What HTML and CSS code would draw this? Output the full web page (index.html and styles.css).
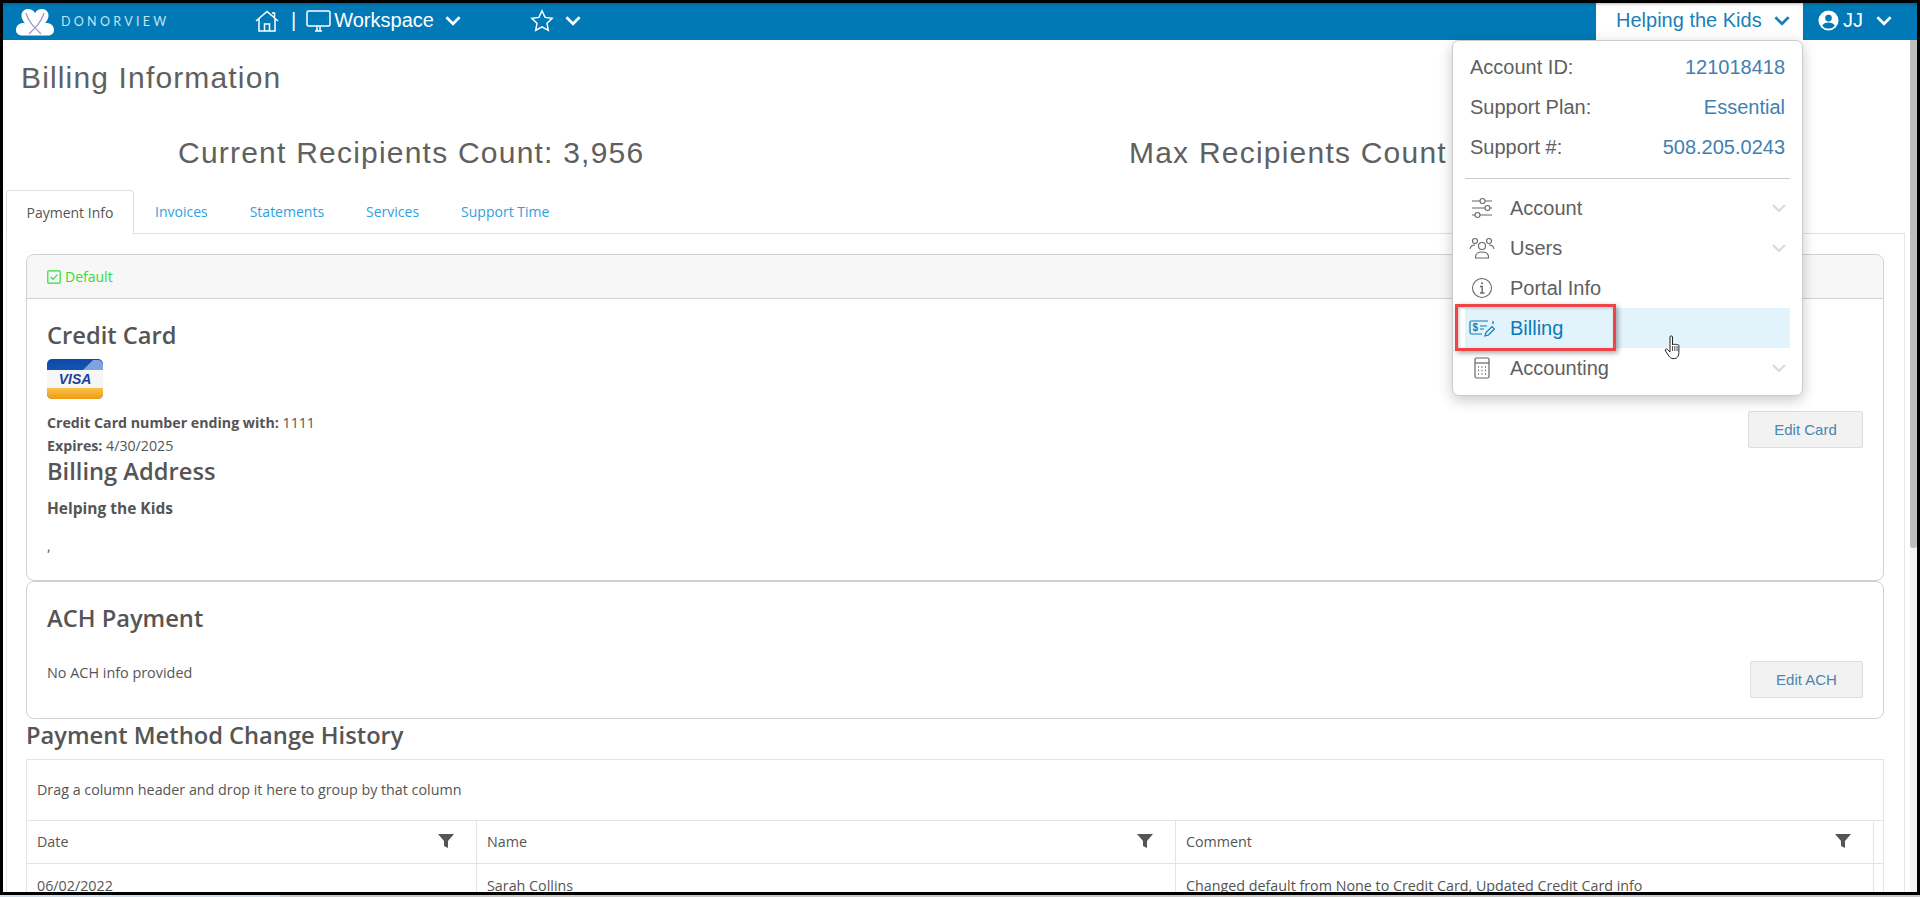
FILE: index.html
```html
<!DOCTYPE html>
<html lang="en">
<head>
<meta charset="utf-8">
<title>Billing Information</title>
<link rel="stylesheet" href="styles.css">
</head>
<body>
<div class="frame">
  <header class="nav">
    <div class="logo">
      <svg class="logo-mark" viewBox="0 0 42 28" width="42" height="28">
        <path fill="#fff" d="M2 22c0-4 3-7 7-7 .8 0 1.400.1 2 .3C8.500 12.500 7.500 10 7.500 7.500 7.500 3.500 10.500 1 14 1c3 0 5.500 1.500 7 4 1.500-2.500 4-4 7-4 3.500 0 6.500 2.500 6.500 6.500 0 2.500-1 5-3.500 7.800.6-.2 1.300-.3 2-.3 4 0 7 3 7 7s-3 5.500-6.500 5.500H8.500C5 27.500 2 26 2 22z"/>
        <path fill="none" stroke="#9d93c4" stroke-width="1.200" d="M12 5c2 8 8 14 15 21M30 5c-2 8-8 14-15 21"/>
      </svg>
      <span class="logo-text">DONORVIEW</span>
    </div>
    <svg class="ic-home" viewBox="0 0 24 22" width="24" height="22" fill="none" stroke="#fff" stroke-width="1.500">
      <path d="M1 11 12 1.500 23 11"/><path d="M4 9v12h16V9"/><path d="M9.500 21v-7h5v7"/><path d="M17 3h2.500v4"/>
    </svg>
    <span class="sep">|</span>
    <svg class="ic-monitor" viewBox="0 0 25 22" width="25" height="22" fill="none" stroke="#fff" stroke-width="1.500">
      <rect x="1" y="1" width="23" height="15" rx="1.500"/><path d="M9 21h7M11 16.500v4M14 16.500v4"/>
    </svg>
    <span class="nav-label">Workspace</span>
    <svg class="chev chev-work" viewBox="0 0 16 10" width="18" height="11"><path d="M2 2l6 6 6-6"/></svg>
    <svg class="ic-star" viewBox="0 0 24 23" width="24" height="23" fill="none" stroke="#fff" stroke-width="1.500">
      <path d="M12 1.800l3.100 6.600 7.100.9-5.200 5 1.300 7.100-6.300-3.500-6.300 3.500 1.300-7.100-5.200-5 7.100-.9z"/>
    </svg>
    <svg class="chev chev-star" viewBox="0 0 16 10" width="18" height="11"><path d="M2 2l6 6 6-6"/></svg>
    <div class="org">
      <span>Helping the Kids</span>
      <svg class="chev chev-org" viewBox="0 0 16 10" width="18" height="11"><path d="M2 2l6 6 6-6"/></svg>
    </div>
    <div class="user">
      <svg viewBox="0 0 22 22" width="21" height="21"><circle cx="11" cy="11" r="10.500" fill="#fff"/><circle cx="11" cy="8.500" r="3.500" fill="#0079b6"/><path fill="#0079b6" d="M4.500 16.500c1-2.800 3.500-3.500 6.500-3.500s5.500.7 6.500 3.500c-1.500 2-3.800 3-6.500 3s-5-1-6.500-3z"/></svg>
      <span>JJ</span>
      <svg class="chev chev-user" viewBox="0 0 16 10" width="18" height="11"><path d="M2 2l6 6 6-6"/></svg>
    </div>
  </header>

  <div class="main">
    <main class="content">
      <h1 class="title">Billing Information</h1>
      <div class="stats">
        <div>Current Recipients Count: 3,956</div>
        <div>Max Recipients Count</div>
      </div>
      <nav class="tabs">
        <a class="tab active">Payment Info</a>
        <a class="tab">Invoices</a>
        <a class="tab">Statements</a>
        <a class="tab">Services</a>
        <a class="tab">Support Time</a>
      </nav>
      <section class="pane">
        <div class="card card-cc">
          <div class="card-head">
            <svg viewBox="0 0 14 14" width="14" height="14" fill="none" stroke="#2fdc3a" stroke-width="1.200"><rect x=".8" y=".8" width="12.400" height="12.400" rx="1"/><path d="M3.800 7l2.300 2.400 4.300-4.800"/></svg>
            <span>Default</span>
          </div>
          <div class="card-body">
            <div>
              <h3 class="h-cc">Credit Card</h3>
              <svg class="visa" viewBox="0 0 56 40" width="56" height="40">
                <defs>
                  <linearGradient id="vb" x1="0" y1="0" x2="0" y2="1"><stop offset="0" stop-color="#0c4aa8"/><stop offset="1" stop-color="#2c6cc4"/></linearGradient>
                  <linearGradient id="vo" x1="0" y1="0" x2="0" y2="1"><stop offset="0" stop-color="#fbc24a"/><stop offset="1" stop-color="#ee9a12"/></linearGradient>
                </defs>
                <rect width="56" height="40" rx="5" fill="url(#vb)"/>
                <path d="M36 11 46 1h5a5 5 0 0 1 5 5v5z" fill="#7fa3dc"/>
                <rect y="11" width="56" height="18" fill="#f6f6f6"/>
                <path d="M0 29h56v6a5 5 0 0 1-5 5H5a5 5 0 0 1-5-5z" fill="url(#vo)"/>
                <text x="28" y="25" text-anchor="middle" class="visa-text">VISA</text>
              </svg>
              <p class="line first"><b>Credit Card number ending with:</b> 1111</p>
              <p class="line"><b>Expires:</b> 4/30/2025</p>
              <h3>Billing Address</h3>
              <p class="line org-name"><b>Helping the Kids</b></p>
              <p class="line comma">,</p>
            </div>
            <button class="btn btn-card">Edit Card</button>
          </div>
        </div>
        <div class="card card-ach">
          <div class="card-body">
            <div>
              <h3 class="h-ach">ACH Payment</h3>
              <p class="line no-ach">No ACH info provided</p>
            </div>
            <button class="btn btn-ach">Edit ACH</button>
          </div>
        </div>
        <h3 class="h-history">Payment Method Change History</h3>
        <div class="grid">
          <div class="group-row">Drag a column header and drop it here to group by that column</div>
          <div class="grid-row grid-header">
            <div class="cell">Date<svg class="funnel" viewBox="0 0 16 16" width="16" height="16"><path d="M0 1h16l-6 7v7l-4-2V8z"/></svg></div>
            <div class="cell">Name<svg class="funnel" viewBox="0 0 16 16" width="16" height="16"><path d="M0 1h16l-6 7v7l-4-2V8z"/></svg></div>
            <div class="cell">Comment<svg class="funnel" viewBox="0 0 16 16" width="16" height="16"><path d="M0 1h16l-6 7v7l-4-2V8z"/></svg></div>
            <div class="cell"></div>
          </div>
          <div class="grid-row grid-data">
            <div class="cell">06/02/2022</div>
            <div class="cell">Sarah Collins</div>
            <div class="cell">Changed default from None to Credit Card, Updated Credit Card info</div>
            <div class="cell"></div>
          </div>
        </div>
      </section>
    </main>
    <div class="scrollbar"><div class="thumb"></div></div>
  </div>

  <aside class="menu">
    <dl class="info">
      <div><dt>Account ID:</dt><dd>121018418</dd></div>
      <div><dt>Support Plan:</dt><dd>Essential</dd></div>
      <div><dt>Support #:</dt><dd>508.205.0243</dd></div>
    </dl>
    <div class="items">
      <div class="item">
        <svg viewBox="0 0 24 24" width="24" height="24" fill="none" stroke="#666" stroke-width="1.100"><path d="M2 5h8M15 5h7M2 12h13M20 12h2M2 19h3M10 19h12"/><circle cx="12.500" cy="5" r="2.500"/><circle cx="17.500" cy="12" r="2.500"/><circle cx="7.500" cy="19" r="2.500"/></svg>
        <span>Account</span>
        <svg class="chev-light" viewBox="0 0 16 10" width="16" height="10"><path d="M2 2l6 6 6-6"/></svg>
      </div>
      <div class="item">
        <svg viewBox="0 0 26 24" width="26" height="24" fill="none" stroke="#666" stroke-width="1.100"><circle cx="13" cy="10" r="3.500"/><path d="M6.500 22v-1c0-3.500 3-5 6.500-5s6.500 1.500 6.500 5v1z"/><circle cx="6" cy="5" r="2.500"/><circle cx="20" cy="5" r="2.500"/><path d="M1 13c.5-2.500 2.500-4 5-4M25 13c-.5-2.500-2.500-4-5-4"/></svg>
        <span>Users</span>
        <svg class="chev-light" viewBox="0 0 16 10" width="16" height="10"><path d="M2 2l6 6 6-6"/></svg>
      </div>
      <div class="item">
        <svg viewBox="0 0 24 24" width="24" height="24" fill="none" stroke="#666" stroke-width="1.100"><circle cx="12" cy="12" r="9.500"/><path d="M10 10.500h2.200V17M10 17h4.500" stroke-width="1.400"/><circle cx="12" cy="7.300" r="1" fill="#666" stroke="none"/></svg>
        <span>Portal Info</span>
      </div>
      <div class="item current">
        <svg viewBox="0 0 26 24" width="26" height="24" fill="none" stroke="#0a7ab8" stroke-width="1.200"><path d="M19 5H2.500A1.500 1.500 0 0 0 1 6.500v10A1.500 1.500 0 0 0 2.500 18H13M24 5v3"/><path d="M11 10h7M11 13h4"/><path d="M16 20l1-3.500 6-6 2.500 2.500-6 6z"/><text x="3.500" y="15" class="dollar">$</text></svg>
        <span>Billing</span>
      </div>
      <div class="item">
        <svg viewBox="0 0 24 24" width="24" height="24" fill="none" stroke="#666" stroke-width="1.200"><rect x="5" y="2" width="14" height="20" rx="1.500"/><path d="M5 7h14"/><path d="M8 11h1M11.500 11h1M15 11h1M8 14.500h1M11.500 14.500h1M15 14.500h1M8 18h1M11.500 18h1M15 18h1" stroke-width="1.500"/></svg>
        <span>Accounting</span>
        <svg class="chev-light" viewBox="0 0 16 10" width="16" height="10"><path d="M2 2l6 6 6-6"/></svg>
      </div>
    </div>
  </aside>
  <div class="redbox"></div>
  <svg class="cursor" viewBox="0 0 18 26" width="18" height="26"><path fill="#fff" stroke="#222" stroke-width="1" d="M6 2c0-1.500 2.500-1.500 2.500 0v8c0-1 2-1 2.200 0 .1-1 2-1 2.200.1.200-.9 2-.7 2 .5v7c0 3-1.500 6-4.500 6H9c-2 0-3-1-4-2.500L1.500 16c-1-1.500.8-2.800 2-1.500L6 17z"/><path stroke="#222" stroke-width=".8" d="M8.500 11v5M10.800 11v5M13 11v5"/></svg>
</div>
<div class="status"><div class="status-left"></div></div>
</body>
</html>
```

FILE: styles.css
```css
* { box-sizing: border-box; }
html, body { margin: 0; height: 897px; overflow: hidden; background: #c8c8c8; }
body { font-family: "Open Sans", sans-serif; color: #555; }

.frame {
  position: relative;
  height: 895px;
  border: 3px solid #000;
  background: #fff;
  display: flex;
  flex-direction: column;
  overflow: hidden;
}

/* top bar */
.nav {
  height: 37px;
  padding-bottom: 2px;
  flex: none;
  display: flex;
  align-items: center;
  background: #0079b6;
  color: #fff;
  font-family: "Liberation Sans", sans-serif;
  box-shadow: inset 0 3px 3px -2px rgba(0, 0, 0, .25);
}
.logo { width: 249px; padding: 2px 0 0 11px; display: flex; align-items: center; flex: none; }
.logo-mark { flex: none; }
.logo-text {
  margin-left: 5px;
  font-family: "Lato", sans-serif;
  font-size: 12.500px;
  letter-spacing: 3.300px;
  color: #c4e2f0;
}
.ic-home { margin-left: 3px; flex: none; }
.sep { margin-left: 12px; font-size: 20px; }
.ic-monitor { margin-left: 10px; flex: none; }
.nav-label { margin-left: 3px; font-size: 20px; }
.chev { fill: none; stroke: #fff; stroke-width: 2.400; flex: none; }
.chev-work { margin-left: 10px; }
.ic-star { margin-left: 68px; flex: none; }
.chev-star { margin-left: 10px; }
.org {
  margin-left: auto;
  align-self: flex-start;
  width: 207px;
  height: 37px;
  padding: 0 0 2px 20px;
  display: flex;
  align-items: center;
  background: #fff;
  color: #1a7fb8;
  font-size: 20px;
  box-shadow: inset 0 3px 3px -2px rgba(0, 0, 0, .3);
}
.chev-org { stroke: #1a7fb8; margin-left: 11px; }
.user {
  width: 114px;
  padding-left: 15px;
  display: flex;
  align-items: center;
  font-size: 20px;
}
.user span { margin-left: 4px; }
.chev-user { margin-left: 12px; }

/* page */
.main { flex: 1; min-height: 0; display: flex; }
.content { flex: 1; min-width: 0; overflow: hidden; }
.scrollbar { width: 7px; flex: none; background: #f4f4f4; }
.thumb { height: 508px; background: #bdbdbd; border-radius: 0 0 3px 3px; }

.title {
  margin: 18px 0 0 18px;
  font-family: "Liberation Sans", sans-serif;
  font-size: 30px;
  font-weight: 400;
  line-height: 40px;
  letter-spacing: 1.150px;
  color: #606060;
}
.stats {
  margin-top: 35px;
  height: 40px;
  padding-left: 175px;
  display: grid;
  grid-template-columns: 951px 1fr;
  font-family: "Liberation Sans", sans-serif;
  font-size: 30px;
  line-height: 40px;
  letter-spacing: 1.220px;
  color: #606060;
  white-space: nowrap;
}

.tabs {
  margin: 17px 5px 0 3px;
  height: 44px;
  display: flex;
  border-bottom: 1px solid #e0e0e0;
  font-size: 14px;
  line-height: 44px;
  color: #2fa0e0;
  white-space: nowrap;
}
.tab { padding: 0 21px; border: 0; }
.tab.active {
  width: 128px;
  height: 44px;
  padding: 0 19.500px;
  line-height: 43px;
  color: #555;
  background: #fff;
  border: 1px solid #e0e0e0;
  border-bottom: 0;
  border-radius: 4px 4px 0 0;
}

.pane {
  margin: 0 5px 0 3px;
  padding: 20px 20px 0 19px;
  border: 1px solid #e6e6e6;
  border-top: 0;
}
.card { border: 1px solid #d0d0d0; border-radius: 8px; }
.card-cc { height: 327px; }
.card-ach { height: 138px; }
.card-head {
  height: 44px;
  padding-left: 20px;
  display: flex;
  align-items: center;
  gap: 4px;
  background: #f7f7f7;
  border-bottom: 1px solid #d0d0d0;
  border-radius: 8px 8px 0 0;
  font-size: 14px;
  color: #2fdc3a;
}
.card-body { padding: 0 20px; display: flex; justify-content: space-between; align-items: flex-start; }
h3 { margin: 0; font-size: 23.700px; font-weight: 600; line-height: 28px; color: #555; }
.h-cc { margin-top: 22px; }
.visa { display: block; margin-top: 10px; }
.visa-text { font: italic 700 14px "Liberation Sans", sans-serif; fill: #1c3f9c; }
.line { margin: 0; font-size: 14.200px; line-height: 23px; }
.line.first { margin-top: 12px; }
.org-name { margin-top: 12px; font-size: 15.500px; }
.comma { margin-top: 14px; }
.h-ach { margin-top: 22px; }
.no-ach { margin-top: 29px; font-size: 14.400px; }
.btn {
  flex: none;
  height: 37px;
  border: 1px solid #ddd;
  border-radius: 2px;
  background: #f2f2f2;
  color: #4a86ad;
  font-family: "Liberation Sans", sans-serif;
  font-size: 15px;
}
.btn-card { width: 115px; margin-top: 112px; }
.btn-ach { width: 113px; margin-top: 79px; }

.h-history { margin-top: 2px; }
.grid { margin-top: 10px; border: 1px solid #e4e4e4; border-bottom: 0; font-size: 14.300px; }
.group-row { height: 61px; padding-left: 10px; line-height: 59px; border-bottom: 1px solid #e4e4e4; }
.grid-row { display: grid; grid-template-columns: 450px 699px 698px 1fr; }
.grid-header { height: 43px; border-bottom: 1px solid #e4e4e4; }
.grid-data { height: 40px; }
.cell {
  position: relative;
  padding: 9px 10px 0;
  line-height: 23px;
  border-right: 1px solid #e4e4e4;
  white-space: nowrap;
}
.grid-data .cell { padding-top: 10px; }
.cell:last-child { border-right: 0; }
.funnel { position: absolute; top: 12px; right: 22px; fill: #555; }

/* account menu */
.menu {
  position: absolute;
  top: 37px;
  left: 1449px;
  width: 351px;
  height: 356px;
  padding: 6px 12px 0;
  background: #fff;
  border: 1px solid #ccc;
  border-radius: 7px;
  box-shadow: 0 4px 14px rgba(0, 0, 0, .22);
  font-family: "Liberation Sans", sans-serif;
  font-size: 20px;
}
.info { margin: 0; padding: 0 5px 10px 5px; border-bottom: 1px solid #ccc; }
.info div { height: 40.200px; display: flex; align-items: center; justify-content: space-between; }
.info dt { color: #606060; }
.info dd { margin: 0; color: #3f80b0; }
.items { margin-top: 9px; }
.item { height: 40px; padding: 0 3px 0 0; display: flex; align-items: center; color: #606060; }
.item > svg:first-child { width: 26px; margin-left: 4px; flex: none; }
.item span { margin: 2px 0 0 15px; }
.item.current { background: #e3f3fb; color: #0a7ab8; }
.chev-light { margin-left: auto; fill: none; stroke: #d8d8d8; stroke-width: 2; }
.dollar { font: 700 10px "Liberation Sans", sans-serif; fill: #0a7ab8; stroke: none; }

.redbox {
  position: absolute;
  top: 301px;
  left: 1452px;
  width: 161px;
  height: 47px;
  border: 3px solid #f04548;
  box-shadow: 2px 2px 5px rgba(0, 0, 0, .35), inset 1px 1px 3px rgba(0, 0, 0, .25);
}
.cursor { position: absolute; top: 332px; left: 1661px; }

.status { height: 2px; background: #c8c8c8; }
.status-left { width: 280px; height: 2px; background: #cdddee; }
```
